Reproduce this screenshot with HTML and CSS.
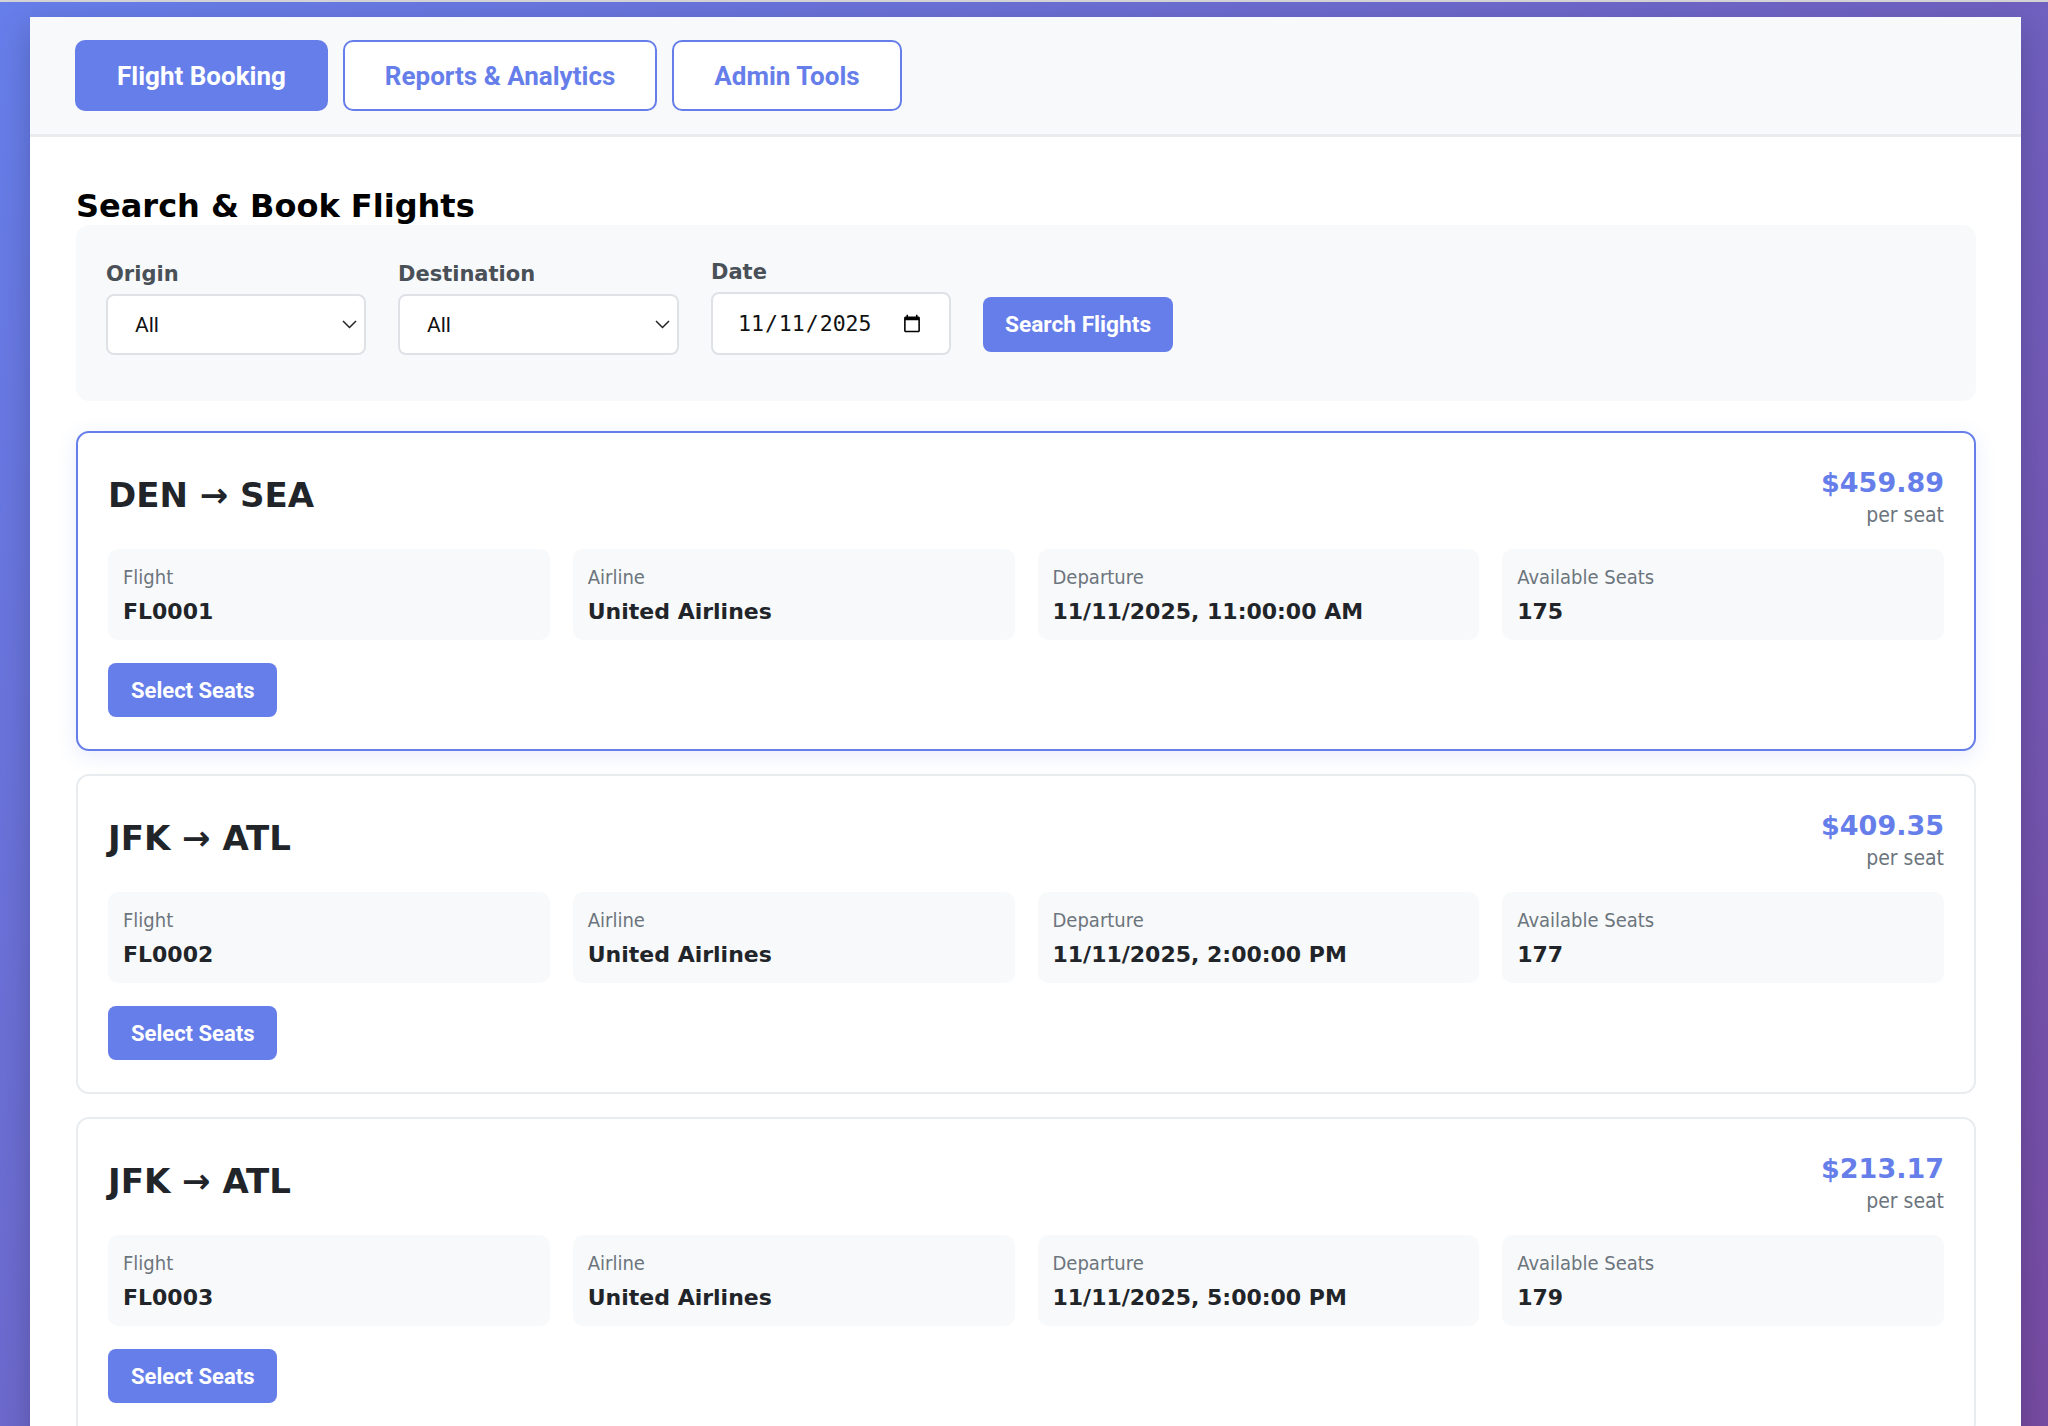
FILE: index.html
```html
<!DOCTYPE html>
<html lang="en">
<head>
    <meta charset="UTF-8">
    <meta name="viewport" content="width=device-width, initial-scale=1.0">
    <title>Flight Booking System</title>
    <link rel="stylesheet" href="styles.css">
</head>
<body>
    <div class="container">
        <nav class="tabs">
            <button class="tab active">Flight Booking</button>
            <button class="tab">Reports &amp; Analytics</button>
            <button class="tab">Admin Tools</button>
        </nav>

        <div class="content">
            <h2>Search &amp; Book Flights</h2>
            <div class="search-panel">
                <div class="form-group">
                    <label for="origin">Origin</label>
                    <div class="select-wrap">
                        <select id="origin" class="origin">
                            <option>All</option>
                            <option>ATL</option>
                            <option>DEN</option>
                            <option>JFK</option>
                        </select>
                        <svg class="chevron" width="15" height="9" viewBox="0 0 15 9"><path d="M1 1l6.5 6.5L14 1" fill="none" stroke="#222" stroke-width="1.5"/></svg>
                    </div>
                </div>
                <div class="form-group">
                    <label for="destination">Destination</label>
                    <div class="select-wrap">
                        <select id="destination" class="destination">
                            <option>All</option>
                            <option>ATL</option>
                            <option>SEA</option>
                        </select>
                        <svg class="chevron" width="15" height="9" viewBox="0 0 15 9"><path d="M1 1l6.5 6.5L14 1" fill="none" stroke="#222" stroke-width="1.5"/></svg>
                    </div>
                </div>
                <div class="form-group">
                    <label for="date">Date</label>
                    <input type="date" id="date" value="2025-11-11">
                </div>
                <button class="btn search-btn">Search Flights</button>
            </div>

            <div class="flight-card selected">
                <div class="flight-header">
                    <div class="route">DEN → SEA</div>
                    <div class="price">
                        <div class="amount">$459.89</div>
                        <div class="per">per seat</div>
                    </div>
                </div>
                <div class="flight-info">
                    <div class="info-item"><div class="info-label">Flight</div><div class="info-value">FL0001</div></div>
                    <div class="info-item"><div class="info-label">Airline</div><div class="info-value">United Airlines</div></div>
                    <div class="info-item"><div class="info-label">Departure</div><div class="info-value">11/11/2025, 11:00:00 AM</div></div>
                    <div class="info-item"><div class="info-label">Available Seats</div><div class="info-value">175</div></div>
                </div>
                <button class="btn">Select Seats</button>
            </div>

            <div class="flight-card">
                <div class="flight-header">
                    <div class="route">JFK → ATL</div>
                    <div class="price">
                        <div class="amount">$409.35</div>
                        <div class="per">per seat</div>
                    </div>
                </div>
                <div class="flight-info">
                    <div class="info-item"><div class="info-label">Flight</div><div class="info-value">FL0002</div></div>
                    <div class="info-item"><div class="info-label">Airline</div><div class="info-value">United Airlines</div></div>
                    <div class="info-item"><div class="info-label">Departure</div><div class="info-value">11/11/2025, 2:00:00 PM</div></div>
                    <div class="info-item"><div class="info-label">Available Seats</div><div class="info-value">177</div></div>
                </div>
                <button class="btn">Select Seats</button>
            </div>

            <div class="flight-card">
                <div class="flight-header">
                    <div class="route">JFK → ATL</div>
                    <div class="price">
                        <div class="amount">$213.17</div>
                        <div class="per">per seat</div>
                    </div>
                </div>
                <div class="flight-info">
                    <div class="info-item"><div class="info-label">Flight</div><div class="info-value">FL0003</div></div>
                    <div class="info-item"><div class="info-label">Airline</div><div class="info-value">United Airlines</div></div>
                    <div class="info-item"><div class="info-label">Departure</div><div class="info-value">11/11/2025, 5:00:00 PM</div></div>
                    <div class="info-item"><div class="info-label">Available Seats</div><div class="info-value">179</div></div>
                </div>
                <button class="btn">Select Seats</button>
            </div>
        </div>
    </div>
</body>
</html>
```

FILE: styles.css
```css
* {
    box-sizing: border-box;
}
body {
    margin: 0;
    border-top: 2px solid #d3d3d6;
    padding: 15px 27px 0 30px;
    background: linear-gradient(135deg, #667eea 0%, #764ba2 100%) fixed;
    font-family: "DejaVu Sans", Verdana, sans-serif;
}
.container {
    background: #fff;
    box-shadow: 0 10px 30px rgba(0, 0, 0, 0.2);
}
.tabs {
    display: flex;
    gap: 15px;
    padding: 23px 45px;
    background: #f8f9fa;
    border-bottom: 3px solid #e9ecef;
}
.tab {
    height: 71px;
    padding: 0 40px;
    font-family: Roboto, sans-serif;
    font-size: 26px;
    font-weight: 700;
    color: #667eea;
    background: #fff;
    border: 2px solid #667eea;
    border-radius: 10px;
    cursor: pointer;
}
.tab.active {
    background: #667eea;
    color: #fff;
}
.content {
    padding: 50px 45px 40px 46px;
}
h2 {
    margin: 0;
    font-size: 32px;
    line-height: 38px;
    color: #000;
}
.search-panel {
    display: flex;
    align-items: flex-end;
    gap: 32px;
    padding: 35px 30px 46px;
    margin-bottom: 30px;
    background: #f8f9fa;
    border-radius: 13px;
}
.form-group label {
    display: block;
    margin-bottom: 8px;
    font-size: 21px;
    font-weight: 700;
    color: #495057;
}
.select-wrap {
    position: relative;
}
.select-wrap select {
    appearance: none;
    -webkit-appearance: none;
    height: 61px;
    padding: 0 40px 0 27px;
    font-family: Roboto, sans-serif;
    font-size: 21px;
    color: #111;
    background: #fff;
    border: 2px solid #dee2e6;
    border-radius: 8px;
}
.select-wrap .origin {
    width: 260px;
}
.select-wrap .destination {
    width: 281px;
}
.chevron {
    position: absolute;
    right: 9px;
    top: 26px;
    pointer-events: none;
}
input[type="date"] {
    width: 240px;
    height: 63px;
    padding: 0 27px 0 24px;
    font-family: "DejaVu Sans Mono", monospace;
    font-size: 21.5px;
    color: #111;
    background: #fff;
    border: 2px solid #dee2e6;
    border-radius: 8px;
}
input[type="date"]::-webkit-calendar-picker-indicator {
    width: 20px;
    height: 20px;
    padding: 0;
    margin: 0;
}
.btn {
    height: 54px;
    padding: 0 23px;
    font-family: Roboto, sans-serif;
    font-size: 22px;
    font-weight: 700;
    color: #fff;
    background: #667eea;
    border: none;
    border-radius: 8px;
    cursor: pointer;
}
.search-btn {
    height: 55px;
    padding: 0 22px;
    margin-bottom: 3px;
    font-size: 22.7px;
}
.flight-card {
    padding: 30px 30px 32px;
    margin-bottom: 23px;
    background: #fff;
    border: 2px solid #e9ecef;
    border-radius: 13px;
}
.flight-card.selected {
    border-color: #667eea;
    box-shadow: 0 5px 20px rgba(102, 126, 234, 0.15);
}
.flight-header {
    display: flex;
    justify-content: space-between;
    align-items: center;
    margin-bottom: 22px;
}
.route {
    font-size: 34px;
    font-weight: 700;
    color: #212529;
}
.price {
    text-align: right;
}
.amount {
    font-size: 27px;
    line-height: 40px;
    font-weight: 700;
    color: #667eea;
}
.per,
.info-label {
    font-family: "DejaVu Sans Condensed", "Liberation Sans", sans-serif;
    font-size: 20px;
    color: #6c757d;
}
.per {
    font-size: 21px;
    line-height: 24px;
}
.flight-info {
    display: grid;
    grid-template-columns: repeat(4, 1fr);
    gap: 23px;
    margin-bottom: 23px;
}
.info-item {
    padding: 16px 15px;
    background: #f8f9fa;
    border-radius: 10px;
}
.info-label {
    margin-bottom: 10px;
}
.info-value {
    font-size: 22px;
    font-weight: 700;
    color: #212529;
}
```
